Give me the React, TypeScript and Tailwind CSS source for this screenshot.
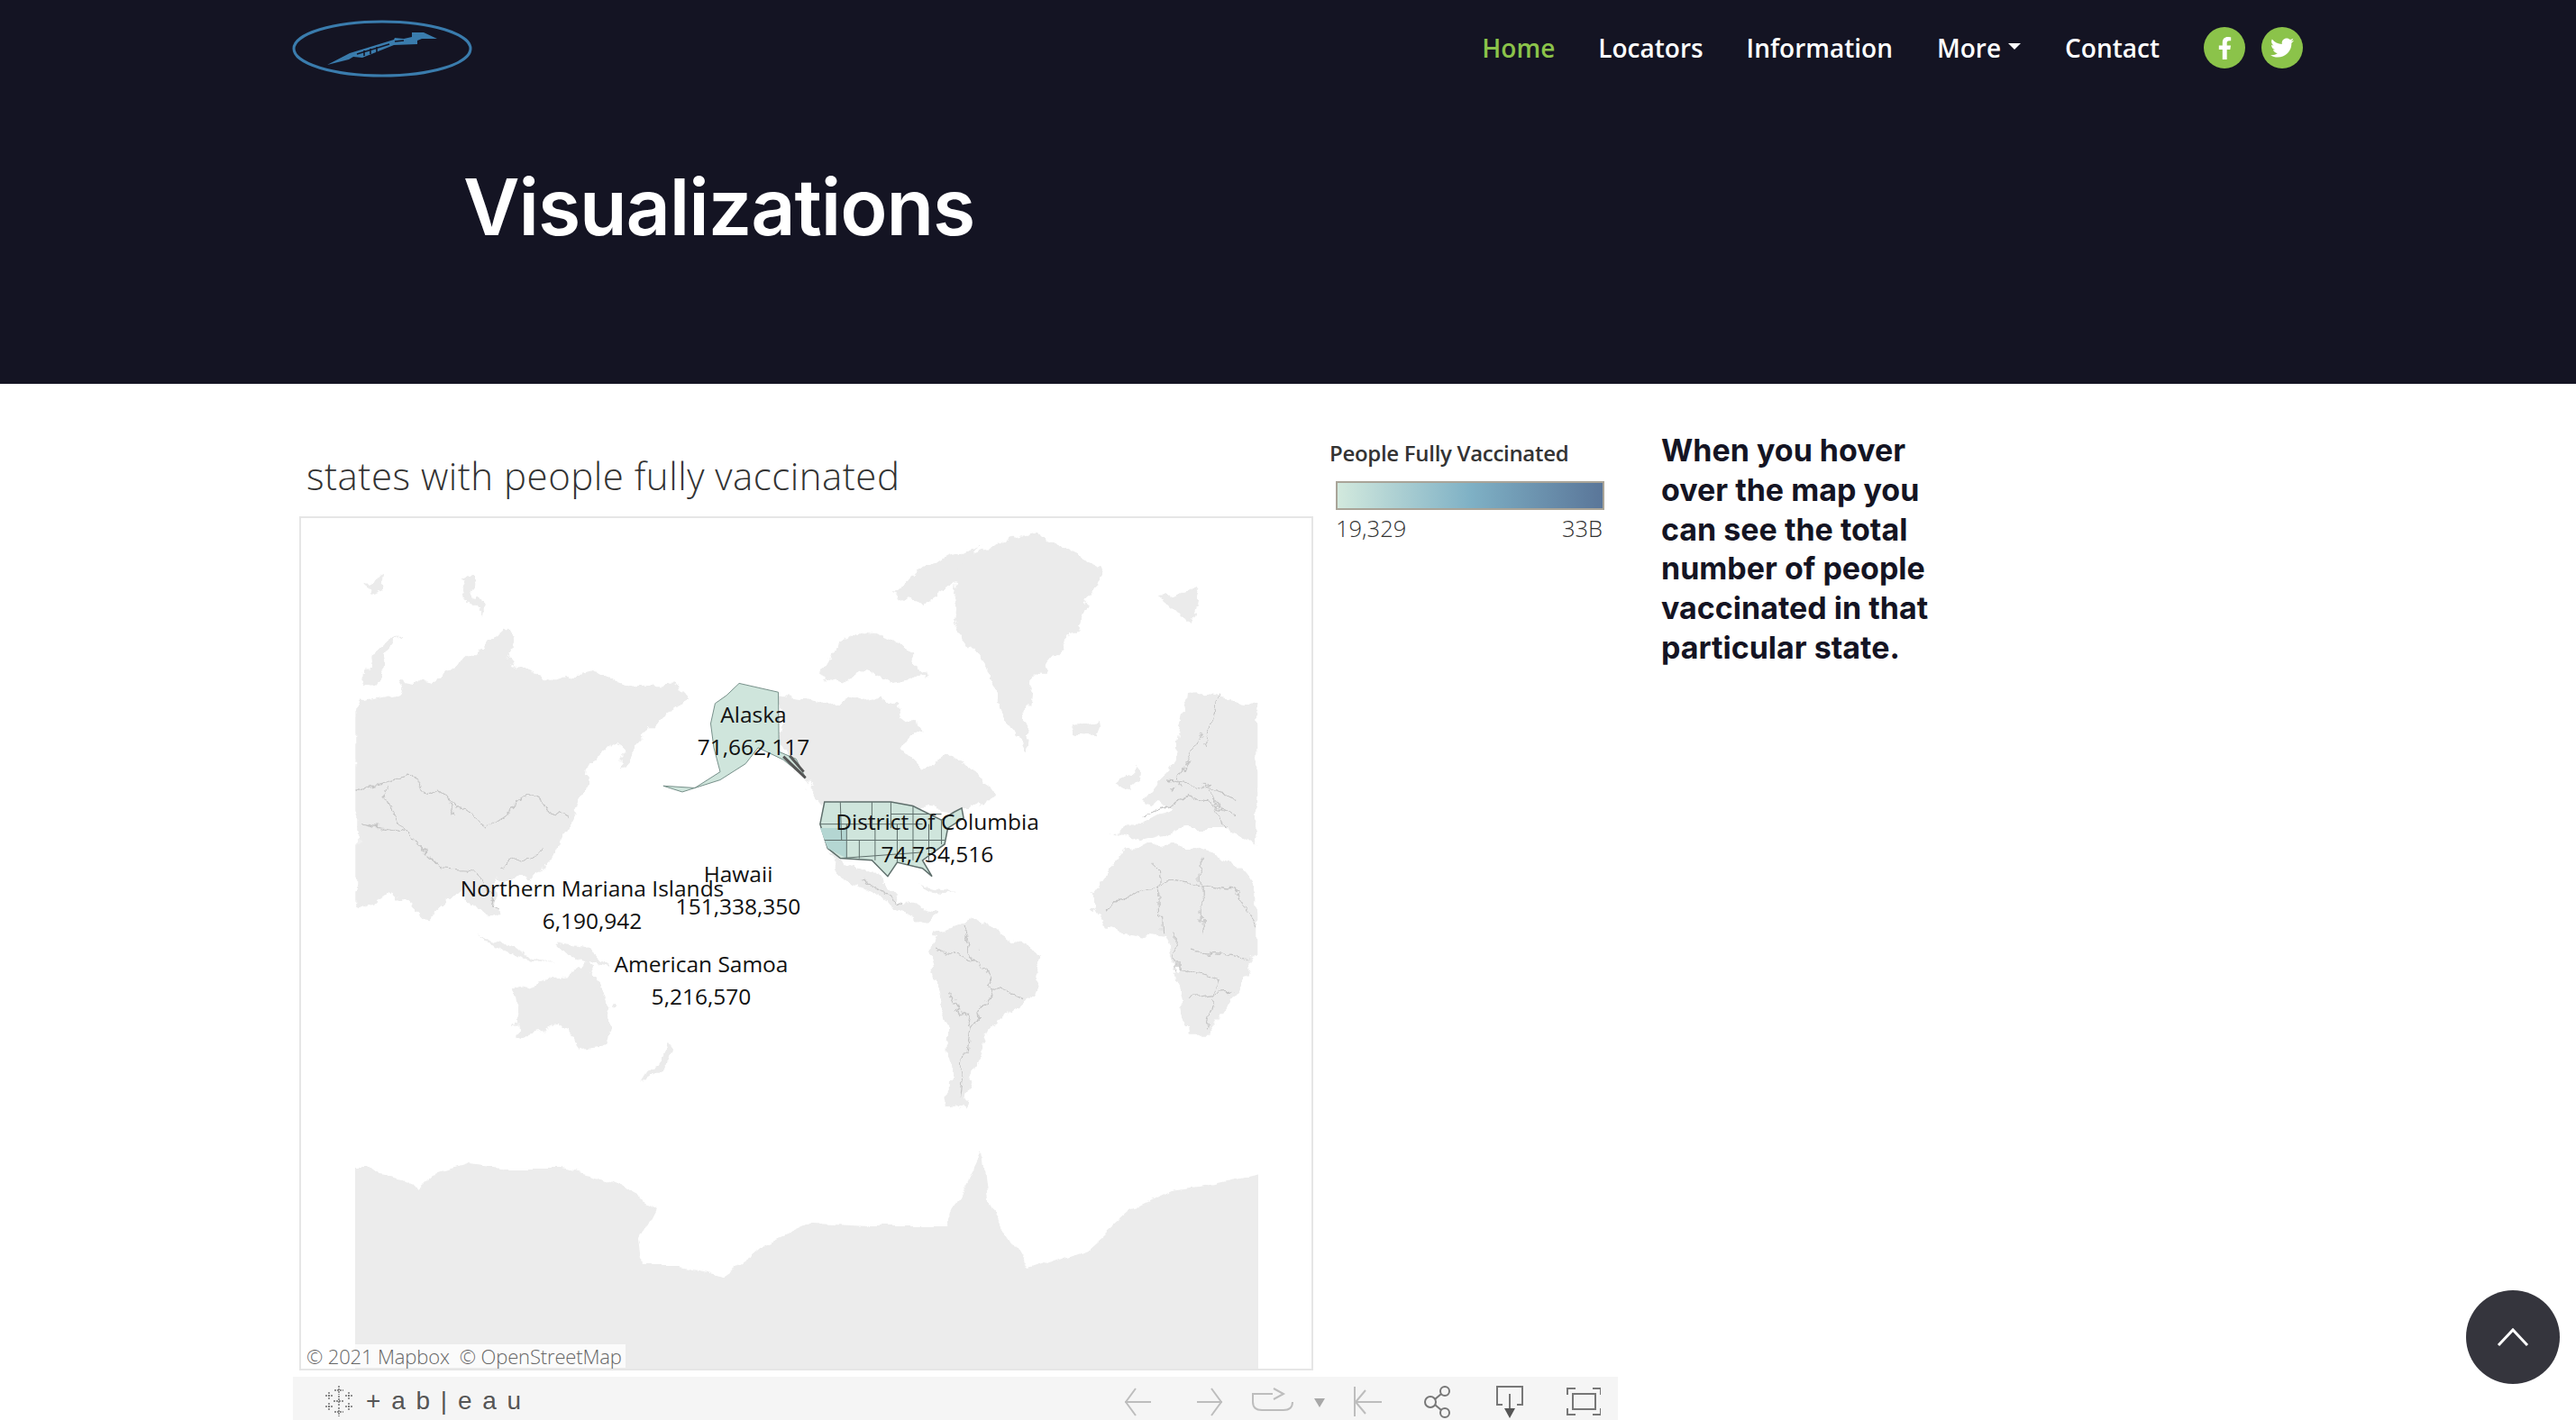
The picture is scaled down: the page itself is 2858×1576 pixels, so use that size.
import { FaFacebookF, FaTwitter } from "react-icons/fa";

const land = [
  "M103 490 L170 470 L180 430 L225 440 L280 380 L340 300 L355 350 L345 390 L420 430 L470 410 L530 445 L610 440 L625 480 L590 520 L545 600 L522 650 L520 585 L470 640 L465 700 L440 790 L420 860 L385 930 L320 920 L330 1015 L310 1025 L270 950 L215 1030 L165 960 L103 1000 Z",
  "M115 440 L125 375 L172 318 L150 400 L135 440 Z M120 190 L150 165 L145 205 L125 215 Z M265 180 L285 170 L305 270 L280 230 Z M835 420 L870 340 L905 310 L960 335 L992 380 L1000 425 L950 440 L905 400 L870 440 Z M950 220 L1000 150 L1090 100 L1065 180 L1005 245 Z",
  "M1062 130 L1170 62 L1285 150 L1245 300 L1172 440 L1160 618 L1132 530 L1100 400 L1045 280 Z M1240 540 L1280 530 L1272 572 L1245 568 Z",
  "M772 470 L845 490 L930 470 L1002 560 L960 600 L1000 660 L1040 610 L1065 645 L1105 690 L1112 720 L1062 760 L1000 750 L845 735 L815 680 L782 620 Z",
  "M845 860 L885 890 L930 925 L965 985 L1025 1010 L1010 1035 L960 1000 L925 965 L885 930 Z M995 940 L1060 968 L1020 962 Z",
  "M1020 1062 L1080 1020 L1130 1062 L1195 1122 L1170 1222 L1105 1300 L1082 1400 L1062 1502 L1040 1472 L1042 1300 L1020 1182 L1010 1102 Z",
  "M1270 960 L1320 850 L1400 838 L1490 880 L1530 960 L1530 1100 L1500 1200 L1452 1312 L1420 1312 L1400 1150 L1380 1070 L1290 1052 L1270 1000 Z",
  "M1300 810 L1350 785 L1392 750 L1350 730 L1395 640 L1420 470 L1452 468 L1530 490 L1530 840 L1480 800 L1420 800 L1345 830 Z M1305 690 L1340 640 L1335 710 Z M1378 225 L1440 200 L1422 295 L1400 260 Z",
  "M352 1200 L440 1165 L470 1130 L513 1240 L495 1340 L455 1350 L430 1290 L360 1320 Z M560 1430 L600 1330 L610 1350 L575 1415 Z M300 1060 L400 1130 L420 1140 L340 1110 Z M420 1090 L470 1100 L510 1150 L440 1120 Z",
];

const borders = [
  "M103 710 L180 670 L250 730 L310 795 L380 720 L430 770 M110 790 L180 810 L240 900 L290 905 L330 1000 M180 810 L150 700 M250 730 L260 770 M330 900 L400 850",
  "M1290 1000 L1390 930 L1490 950 L1530 1040 M1370 880 L1375 1060 M1440 880 L1440 1060 M1400 1060 L1400 1150 L1470 1180 L1450 1300 M1420 1100 L1520 1120 M1420 1220 L1490 1210",
  "M1345 770 L1420 720 L1500 770 M1400 700 L1440 560 M1440 600 L1470 470 M1390 680 L1500 720 M1450 690 L1480 800",
  "M1020 1100 L1090 1130 L1110 1200 L1075 1290 L1060 1470 M1060 1040 L1090 1130 M1110 1200 L1160 1220 M1040 1210 L1075 1290",
  "M905 930 L965 985",
];

const usLines =
  "M870 735 L872 830 M920 735 L920 800 M950 735 L950 800 M838 790 L1000 790 M880 790 L880 875 M925 800 L925 880 M960 790 L960 885 M985 745 L985 880 M845 830 L1035 830 M900 830 L900 875 M1010 790 L1010 880 M870 875 L1000 860 M1030 780 L1030 840 M950 765 L1030 765";

function Logo() {
  return (
    <svg width="202" height="66" viewBox="0 0 202 66" className="block">
      <ellipse cx="100" cy="32" rx="98" ry="30" fill="none" stroke="#3a7cad" strokeWidth="3" />
      <path d="M39 50 L64 37 L113 22 L114 20 L124 21 L133 19 L133 14 L146 14 L161 21 L144 21 L139 23 L139 27 L113 28 L78 42 L68 41 L63 44 Z" fill="#3a7cad" />
      <path d="M72 38 L108 27 M80 34 L80 40 M87 32 L87 38 M94 30 L94 36 M114 24 L124 23" stroke="#141423" strokeWidth="1.6" fill="none" />
    </svg>
  );
}

function MapArt() {
  return (
    <svg viewBox="332 573 1121 944" className="h-full w-full block">
      <defs>
        <clipPath id="mapclip">
          <rect x="103" y="0" width="1427" height="2200" />
        </clipPath>
        <clipPath id="antclip">
          <rect x="392" y="1200" width="1002" height="320" />
        </clipPath>
        <filter id="coast" filterUnits="userSpaceOnUse" x="0" y="0" width="1700" height="1700">
          <feTurbulence type="fractalNoise" baseFrequency="0.035 0.02" numOctaves="4" seed="7" />
          <feDisplacementMap in="SourceGraphic" scale="34" xChannelSelector="R" yChannelSelector="G" />
          <feGaussianBlur stdDeviation="0.7" />
        </filter>
        <filter id="coast2" filterUnits="userSpaceOnUse" x="300" y="1200" width="1200" height="400">
          <feTurbulence type="fractalNoise" baseFrequency="0.03" numOctaves="3" seed="3" />
          <feDisplacementMap in="SourceGraphic" scale="14" xChannelSelector="R" yChannelSelector="G" />
          <feGaussianBlur stdDeviation="0.5" />
        </filter>
      </defs>
      <g clipPath="url(#antclip)">
        <path
          filter="url(#coast2)"
          d="M370 1293 L407 1293 L418 1302 L445 1307 L458 1320 L479 1302 L518 1290 L564 1295 L621 1295 L655 1302 L686 1315 L726 1337 L707 1373 L711 1402 L755 1402 L802 1413 L832 1393 L850 1377 L900 1355 L966 1358 L1048 1358 L1088 1276 L1094 1331 L1139 1407 L1203 1385 L1253 1340 L1300 1319 L1347 1312 L1410 1298 L1410 1560 L370 1560 Z"
          fill="#ececec"
        />
      </g>
      <g transform="translate(320 560) scale(0.7015 0.4464)" clipPath="url(#mapclip)">
        <g filter="url(#coast)">
          {land.map((d) => (
            <path key={d} d={d} fill="#ebebeb" />
          ))}
          {borders.map((d) => (
            <path key={d} d={d} fill="none" stroke="#c4c4c4" strokeWidth="1.2" vectorEffect="non-scaling-stroke" />
          ))}
        </g>
        <path
          d="M672 490 L690 470 L710 440 L772 462 L773 610 L800 628 L815 675 L780 630 L740 600 L720 640 L680 680 L620 710 L590 695 L640 700 L680 660 L670 600 L665 540 Z"
          fill="#cfe5dc"
          stroke="#77908a"
          strokeWidth="1"
          vectorEffect="non-scaling-stroke"
        />
        <path d="M780 622 L815 675 M790 620 L812 660" stroke="#555" strokeWidth="3" vectorEffect="non-scaling-stroke" />
        <path
          d="M845 735 L950 735 L985 745 L1030 780 L1050 760 L1062 750 L1065 775 L1040 800 L1035 840 L1000 880 L1015 920 L1000 900 L960 885 L945 920 L920 880 L870 875 L850 850 L838 790 Z"
          fill="#cfe5dc"
          stroke="#5f6f6c"
          strokeWidth="1.5"
          vectorEffect="non-scaling-stroke"
        />
        <path d="M838 800 L880 800 L880 875 L850 850 Z" fill="#b4d6d2" />
        <path d={usLines} fill="none" stroke="#5f6f6c" strokeWidth="1" vectorEffect="non-scaling-stroke" />
      </g>
    </svg>
  );
}

function TableauMark() {
  return (
    <svg width="36" height="36" viewBox="0 0 36 36" fill="none" stroke="#6e6e6e" strokeWidth="1.4" strokeDasharray="2 1">
      <path d="M18 1v10M13 6h10M18 25v10M13 30h10M18 12v12M12 18h12M7 8v8M3 12h8M29 8v8M25 12h8M7 20v8M3 24h8M29 20v8M25 24h8" />
    </svg>
  );
}

function App() {
  const label = "absolute -translate-x-1/2 whitespace-nowrap text-center text-[24.5px] leading-[36px] text-[#111]";
  return (
    <div className="h-[1576px] overflow-hidden bg-white font-['Open_Sans',sans-serif]">
      <header className="h-[426px] bg-[#141423]">
        <div className="flex h-[108px] items-start justify-between pl-[324px] pr-[303px] pt-[22px]">
          <Logo />
          <nav className="mt-[8px] flex items-center text-[28px] leading-[40px] font-semibold text-white">
            <a className="text-[#8bc34a]">Home</a>
            <a className="ml-[48px]">Locators</a>
            <a className="ml-[48px]">Information</a>
            <a className="ml-[49px] flex items-center">
              More
              <span className="ml-[8px] mb-[4px] border-x-[7px] border-t-[7px] border-x-transparent border-t-white" />
            </a>
            <a className="ml-[49px]">Contact</a>
            <span className="ml-[49px] flex h-[46px] w-[46px] items-center justify-center rounded-full bg-[#8bc34a] text-[25px]">
              <FaFacebookF />
            </span>
            <span className="ml-[18px] flex h-[46px] w-[46px] items-center justify-center rounded-full bg-[#8bc34a] text-[26px]">
              <FaTwitter />
            </span>
          </nav>
        </div>
        <h1 className="mt-[70px] pl-[514px] font-['Inter',sans-serif] text-[86px] leading-[104px] font-semibold tracking-[-1.1px] text-white">
          Visualizations
        </h1>
      </header>

      <main className="flex pl-[325px]">
        <section className="w-[1470px] shrink-0">
          <div className="flex">
            <div className="ml-[7px] w-[1125px] shrink-0">
              <h2 className="ml-[8px] flex h-[147px] items-end pb-[20px] text-[42px] leading-[50px] font-light tracking-[0.5px] text-[#333]">
                states with people fully vaccinated
              </h2>
              <div className="relative h-[948px] border-[2px] border-[#e6e6e6]">
                <MapArt />
                <div className={`${label} left-[502px] top-[200px]`}>
                  Alaska
                  <br />
                  71,662,117
                </div>
                <div className={`${label} left-[706px] top-[319px]`}>
                  District of Columbia
                  <br />
                  74,734,516
                </div>
                <div className={`${label} left-[485px] top-[377px]`}>
                  Hawaii
                  <br />
                  151,338,350
                </div>
                <div className={`${label} left-[323px] top-[393px]`}>
                  Northern Mariana Islands
                  <br />
                  6,190,942
                </div>
                <div className={`${label} left-[444px] top-[477px]`}>
                  American Samoa
                  <br />
                  5,216,570
                </div>
                <div className="absolute bottom-[1px] left-[2px] bg-white/80 px-[4px] text-[22px] leading-[26px] tracking-[-0.15px] font-light text-[#666]">
                  © 2021 Mapbox&nbsp; © OpenStreetMap
                </div>
              </div>
            </div>
            <aside className="ml-[18px] w-[320px] shrink-0 pt-[61px]">
              <div className="text-[24px] leading-[32px] font-semibold tracking-[-0.3px] text-[#333]">People Fully Vaccinated</div>
              <div className="mt-[15px] ml-[7px] h-[32px] w-[298px] border-[2px] border-[#a9a498] bg-gradient-to-r from-[#d2e9dd] via-[#7fb1c5] to-[#5a7699]" />
              <div className="ml-[7px] mt-[4px] flex w-[296px] justify-between text-[25.5px] leading-[32px] font-light text-[#333]">
                <span>19,329</span>
                <span>33B</span>
              </div>
            </aside>
          </div>
          <div className="mt-[7px] flex h-[48px] items-center bg-[#f5f5f5] pl-[33px] pt-[6px] text-[#6e6e6e]">
            <TableauMark />
            <span className="ml-[12px] whitespace-nowrap font-['Liberation_Sans',sans-serif] text-[28px] leading-[36px] tracking-[2px] text-[#555]">
              + a b | e a u
            </span>
            <svg className="ml-auto mr-[19px]" width="528" height="40" viewBox="0 0 528 40" fill="none" stroke="#bdbdbd" strokeWidth="2">
              <path d="M0 21H29M12 6L1 21L12 36" />
              <path d="M80 21H108M96 6L107 21L96 36" />
              <path d="M164 12H142Q142 12 142 21Q142 30 152 30H176Q186 30 186 21M165 6L176 12L165 18" />
              <path d="M210 17H222L216 27Z" fill="#a8a8a8" stroke="none" />
              <path d="M255 4V37M285 21H256M267 8L256 21L267 34" />
              <g stroke="#777">
                <circle cx="339" cy="21" r="6" />
                <circle cx="355" cy="9" r="5" />
                <circle cx="355" cy="33" r="5" />
                <path d="M344 18L351 12M344 24L351 30" />
                <path d="M419 24H413V4H441V24H435M427 12V30" />
                <path d="M421 28H433L427 39Z" fill="#555" stroke="none" />
                <path d="M491 13V6H500M519 6H528V13M491 28V35H500M519 35H528V28" />
                <rect x="497" y="12" width="25" height="17" />
              </g>
            </svg>
          </div>
        </section>
        <p className="ml-[48px] mt-[52px] w-[320px] shrink-0 font-['Inter',sans-serif] text-[34px] leading-[43.8px] font-bold text-[#141423]">
          When you hover over the map you can see the total number of people vaccinated in that particular state.
        </p>
      </main>

      <button className="fixed left-[2736px] top-[1432px] flex h-[104px] w-[104px] items-center justify-center rounded-full bg-[#35353d]">
        <svg width="36" height="24" viewBox="0 0 36 24" fill="none" stroke="#fff" strokeWidth="3">
          <path d="M2 21L18 4L34 21" />
        </svg>
      </button>
    </div>
  );
}

export default App;
